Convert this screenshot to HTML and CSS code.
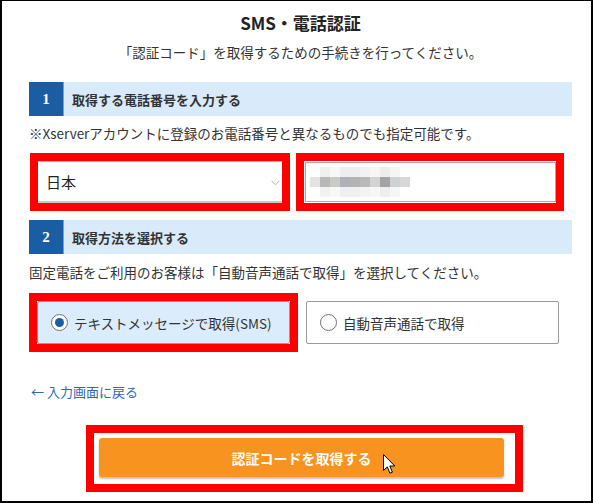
FILE: index.html
```html
<!DOCTYPE html>
<html lang="ja">
<head>
<meta charset="utf-8">
<title>SMS・電話認証</title>
<link rel="stylesheet" href="styles.css">
</head>
<body>
<div class="frame">
  <h1 class="title">SMS・電話認証</h1>
  <p class="lead">「認証コード」を取得するための手続きを行ってください。</p>

  <div class="step"><span class="step-num">1</span><span class="step-label">取得する電話番号を入力する</span></div>
  <p class="note">※Xserverアカウントに登録のお電話番号と異なるものでも指定可能です。</p>

  <div class="phone-row">
    <div class="mark mark-select">
      <div class="select">
        <span>日本</span>
        <svg class="chev" width="9" height="6" viewBox="0 0 9 6"><path d="M0.5 0.8 L4.5 4.8 L8.5 0.8" fill="none" stroke="#b5b5b5" stroke-width="1"/></svg>
      </div>
    </div>
    <div class="mark mark-input">
      <div class="input"><div class="blur"></div></div>
    </div>
  </div>

  <div class="step step2"><span class="step-num">2</span><span class="step-label">取得方法を選択する</span></div>
  <p class="note note2">固定電話をご利用のお客様は「自動音声通話で取得」を選択してください。</p>

  <div class="radio-row">
    <div class="mark mark-radio">
      <div class="radio-box selected"><span class="radio on"></span><span>テキストメッセージで取得(SMS)</span></div>
    </div>
    <div class="radio-box other"><span class="radio"></span><span>自動音声通話で取得</span></div>
  </div>

  <a class="back" href="#">← 入力画面に戻る</a>

  <div class="btn-wrap">
    <div class="mark mark-btn">
      <button class="btn" type="button">認証コードを取得する</button>
    </div>
    <svg class="cursor" width="13" height="21" viewBox="0 0 13 21"><path d="M0.5 0.5 L0.5 16.5 L4.3 12.9 L6.9 19.2 L9.4 18.2 L6.8 12 L11.8 12 Z" fill="#fff" stroke="#000" stroke-width="1" stroke-linejoin="miter"/></svg>
  </div>
</div>
</body>
</html>
```
FILE: styles.css
```css
* { box-sizing: border-box; }
html, body { margin: 0; padding: 0; background: #fff; }
body {
  font-family: "Noto Sans CJK JP", sans-serif;
  color: #333;
}
.frame {
  width: 593px;
  height: 503px;
  border-top: 1px solid #000;
  border-left: 2px solid #000;
  border-right: 2px solid #000;
  border-bottom: 2px solid #000;
  padding: 10px 19px 0 27px;
  position: relative;
  overflow: hidden;
}
.title {
  margin: 0;
  font-size: 17px;
  line-height: 24px;
  font-weight: bold;
  text-align: center;
  color: #222;
}
.lead {
  margin: 7px 0 0;
  font-size: 13.5px;
  line-height: 20px;
  text-align: center;
}
.step {
  display: flex;
  align-items: center;
  height: 34px;
  margin-top: 20px;
  background: #d9ebfb;
}
.step2 { margin-top: 9px; }
.step-num {
  width: 35px;
  height: 34px;
  display: flex;
  align-items: center;
  justify-content: center;
  background: #1b5da3;
  border-right: 1px solid #6f9fd2;
  color: #fff;
  font-family: "Liberation Serif", serif;
  font-weight: bold;
  font-size: 15px;
}
.step-label {
  padding-left: 8px;
  font-size: 13px;
  font-weight: bold;
  color: #333;
}
.note {
  margin: 7px 0 0;
  font-size: 13.5px;
  line-height: 20px;
}
.note2 { margin-top: 8px; }

.mark { border: 8px solid #ff0000; }

.phone-row {
  display: flex;
  gap: 6px;
  margin: 10px 0 0 1px;
}
.mark-select { width: 260px; height: 58px; }
.select {
  height: 42px;
  border-top: 1px solid #b8b8b8;
  border-bottom: 2px solid #c8c8c8;
  display: flex;
  align-items: center;
  justify-content: space-between;
  padding: 0 2px 0 8px;
  font-size: 15px;
  color: #222;
}
.chev { margin-top: 2px; }
.mark-input { width: 268px; height: 58px; padding: 1px 0 1px 1px; }
.input {
  height: 40px;
  border: 1px solid #a9a9a9;
  box-shadow: inset 0 1px 1px rgba(0,0,0,0.08);
  padding: 4px 0 0 4px;
}
.blur {
  width: 100px;
  height: 30px;
  background:
    linear-gradient(90deg, #fff 0 10px, #f0f0f0 10px 20px, #f7f7f7 20px 30px, #eeeef0 30px 50px, #f2f2f2 50px 60px, #f6f6f6 60px 70px, #ededed 70px 80px, #f5f5f5 80px 90px, #fff 90px 100px) 0 0 / 100px 10px no-repeat,
    linear-gradient(90deg, #e6e2e2 0 10px, #b8b8b8 10px 20px, #c9c9c5 20px 30px, #aeb1b7 30px 40px, #b3b3b3 40px 50px, #b9b9b9 50px 60px, #d3d3d3 60px 70px, #a3a3a3 70px 80px, #cdd3d3 80px 90px, #d8d8d8 90px 100px) 0 10px / 100px 10px no-repeat,
    linear-gradient(90deg, #fff 0 10px, #f2f2f2 10px 20px, #f8f8f8 20px 30px, #efeff1 30px 50px, #f3f3f3 50px 60px, #f7f7f7 60px 70px, #eeeeee 70px 80px, #f6f6f6 80px 90px, #fff 90px 100px) 0 20px / 100px 10px no-repeat;
}

.radio-row {
  display: flex;
  align-items: flex-start;
  gap: 8px;
  margin-top: 11px;
}
.mark-radio { width: 269px; }
.radio-box {
  display: flex;
  align-items: center;
  gap: 6px;
  width: 253px;
  height: 43px;
  padding-left: 13px;
  border: 1px solid #9a9a9a;
  border-radius: 2px;
  font-size: 13.5px;
  color: #333;
  background: #fff;
}
.radio-box.selected { background: #dbedfd; }
.radio-box.other { margin-top: 8px; }
.radio {
  width: 17px;
  height: 17px;
  border-radius: 50%;
  border: 1px solid #707070;
  background: #fff;
  display: flex;
  align-items: center;
  justify-content: center;
  flex: none;
}
.radio.on::after {
  content: "";
  width: 9px;
  height: 9px;
  border-radius: 50%;
  background: #1b5da3;
}

.back {
  display: block;
  width: max-content;
  margin: 30px 0 0 2px;
  font-size: 13px;
  line-height: 20px;
  color: #2a6ab3;
  text-decoration: none;
}

.btn-wrap {
  position: relative;
  margin: 23px 0 0 57px;
  width: 437px;
}
.mark-btn {
  width: 437px;
  height: 67px;
  border-width: 8px 8px 8px 8px;
  padding: 5px 11px 7px 5px;
}
.btn {
  display: block;
  width: 405px;
  height: 39px;
  border: none;
  border-radius: 3px;
  background: #f7931e;
  box-shadow: 0 2px 2px rgba(0,0,0,0.25);
  color: #fff;
  font-family: "Noto Sans CJK JP", sans-serif;
  font-weight: bold;
  font-size: 14px;
  padding: 0 0 0 0;
}
.cursor {
  position: absolute;
  left: 297px;
  top: 29px;
}
```
